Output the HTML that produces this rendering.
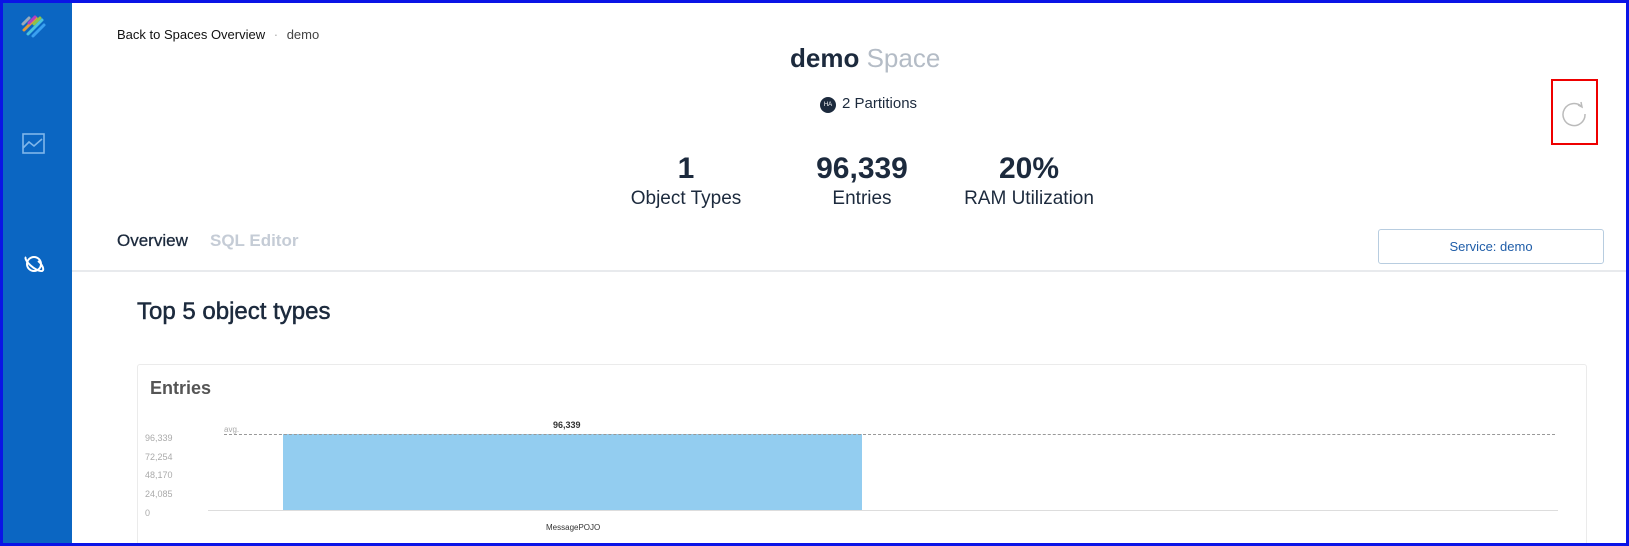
<!DOCTYPE html>
<html><head><meta charset="utf-8"><style>
*{margin:0;padding:0;box-sizing:border-box}
html,body{width:1629px;height:546px;overflow:hidden}
body{background:#fff;font-family:"Liberation Sans",sans-serif;position:relative}
.frame{position:absolute;left:0;top:0;width:1629px;height:546px;border:3px solid #0a14e6;z-index:10;pointer-events:none}
.side{position:absolute;left:0;top:0;width:72px;height:546px;background:#0b66c2}
.a{position:absolute;white-space:nowrap}
</style></head><body>
<div class="side">
<svg class="a" style="left:20px;top:12px" width="28" height="28" viewBox="0 0 28 28" stroke-linecap="round" stroke-width="3">
<line x1="3" y1="12" x2="9" y2="6" stroke="#9ab"/><line x1="4" y1="18" x2="16" y2="6" stroke="#e09a3a"/><line x1="9" y1="11" x2="15" y2="5" stroke="#b23fc4"/><line x1="8" y1="22" x2="22" y2="8" stroke="#4ac0e0"/><line x1="13" y1="24" x2="24" y2="13" stroke="#3aa0f0"/><line x1="14" y1="12" x2="20" y2="6" stroke="#8bc34a"/>
</svg>
<svg class="a" style="left:22px;top:133px" width="24" height="22" viewBox="0 0 24 22" fill="none" stroke="#7fb6ea" stroke-width="1.6"><rect x="1" y="1" width="21" height="19"/><path d="M1 15 L7 9 L12 13 L20 6"/></svg>
<svg class="a" style="left:22px;top:252px" width="24" height="24" viewBox="0 0 24 24" fill="none" stroke="#fff" stroke-width="2"><circle cx="12" cy="12" r="7"/><path d="M4 5 C1 8 14 20 20 19 C23 18 20 12 16 9"/></svg>
</div>
<div class="a" style="left:117px;top:27px;font-size:13px;color:#111">Back to Spaces Overview <span style="color:#aaa;margin:0 5px">·</span> <span style="color:#444">demo</span></div>
<div class="a" style="left:790px;top:43px;font-size:26px;font-weight:bold;color:#1c2a3d">demo <span style="font-weight:normal;color:#b4bcc6">Space</span></div>
<div class="a" style="left:820px;top:97px;width:16px;height:16px;border-radius:50%;background:#1c2a3d;color:#fff;font-size:6px;line-height:16px;text-align:center">HA</div>
<div class="a" style="left:842px;top:95px;font-size:15px;color:#1c2a3d">2 Partitions</div>
<div class="a" style="left:606px;top:152px;width:160px;text-align:center;color:#1c2a3d"><div style="font-size:30px;font-weight:bold">1</div><div style="font-size:19px;margin-top:2px">Object Types</div></div>
<div class="a" style="left:782px;top:152px;width:160px;text-align:center;color:#1c2a3d"><div style="font-size:30px;font-weight:bold">96,339</div><div style="font-size:19px;margin-top:2px">Entries</div></div>
<div class="a" style="left:949px;top:152px;width:160px;text-align:center;color:#1c2a3d"><div style="font-size:30px;font-weight:bold">20%</div><div style="font-size:19px;margin-top:2px">RAM Utilization</div></div>
<div class="a" style="left:1551px;top:79px;width:47px;height:66px;border:2px solid #e00"></div>
<svg class="a" style="left:1560px;top:99px" width="28" height="28" viewBox="0 0 28 28" fill="none" stroke="#bbb" stroke-width="1.5"><path d="M22 8 A11 11 0 1 0 25 15"/><path d="M18 6 L22 8 L21 3"/></svg>
<div class="a" style="left:117px;top:231px;font-size:17px;color:#1c2a3d;-webkit-text-stroke:0.3px #1c2a3d">Overview</div>
<div class="a" style="left:210px;top:231px;font-size:17px;font-weight:bold;color:#c5ccd6">SQL Editor</div>
<div class="a" style="left:1378px;top:229px;width:226px;height:35px;border:1px solid #b8cde0;border-radius:3px;text-align:center;line-height:33px;font-size:13px;color:#1f5da8">Service: demo</div>
<div class="a" style="left:72px;top:270px;width:1554px;height:2px;background:#e8eaed"></div>
<div class="a" style="left:137px;top:298px;font-size:24px;color:#1c2a3d;-webkit-text-stroke:0.5px #1c2a3d">Top 5 object types</div>
<div class="a" style="left:137px;top:364px;width:1450px;height:190px;border:1px solid #ebebeb;border-radius:3px"></div>
<div class="a" style="left:150px;top:378px;font-size:18px;font-weight:bold;color:#555">Entries</div>
<div class="a" style="left:145px;top:429px;font-size:9px;color:#aaa;line-height:18.7px">96,339<br>72,254<br>48,170<br>24,085<br>0</div>
<div class="a" style="left:224px;top:425px;font-size:8px;color:#aaa">avg.</div>
<div class="a" style="left:283px;top:434px;width:579px;height:76px;background:#93cdf0"></div>
<div class="a" style="left:224px;top:434px;width:1331px;border-top:1px dashed #999"></div>
<div class="a" style="left:208px;top:510px;width:1350px;height:1px;background:#ddd"></div>
<div class="a" style="left:553px;top:420px;font-size:9px;font-weight:bold;color:#333">96,339</div>
<div class="a" style="left:546px;top:523px;font-size:8px;color:#333">MessagePOJO</div>
<div class="frame"></div>
</body></html>
